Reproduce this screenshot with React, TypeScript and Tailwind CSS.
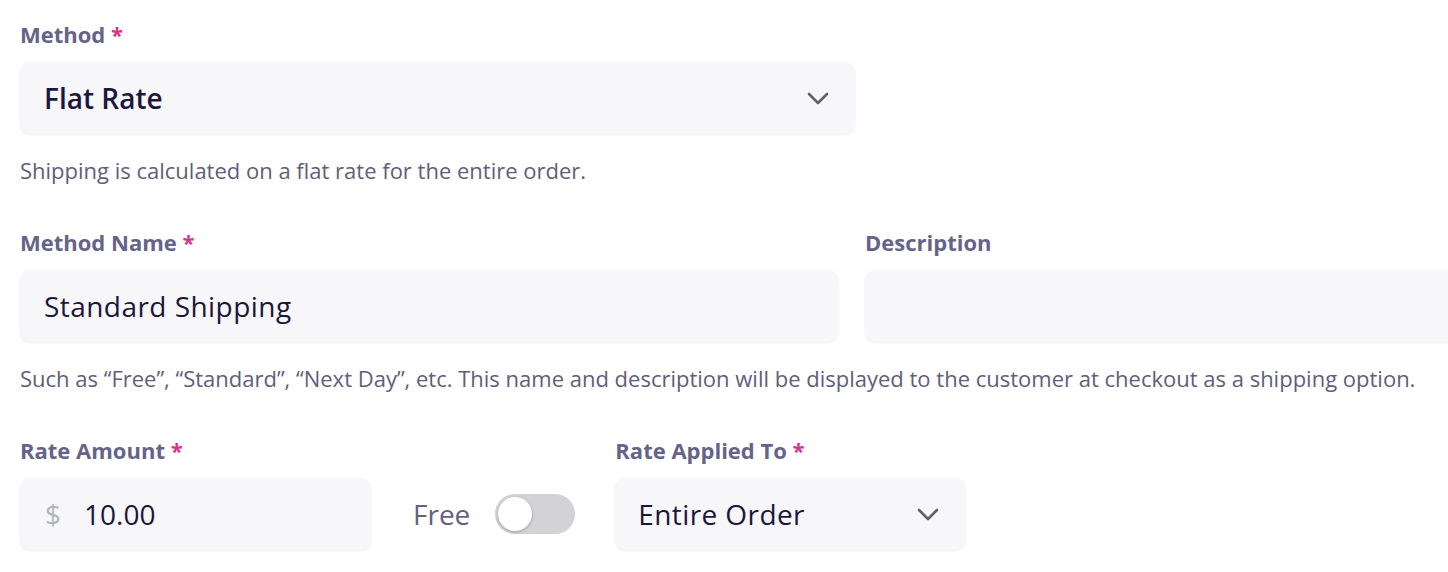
import React from 'react';

const font = { fontFamily: '"Open Sans", "Noto Sans", sans-serif' };

function Label({ text, required }: { text: string; required?: boolean }) {
  return (
    <div className="text-[22px] font-bold leading-[30px] text-[#64638a]">
      {text}
      {required && <span className="text-[#d6338a]"> *</span>}
    </div>
  );
}

function Chevron() {
  return (
    <svg width="22" height="13" viewBox="0 0 22 13" fill="none">
      <polyline
        points="2,2 11,11 20,2"
        stroke="#5e6172"
        strokeWidth="2.6"
        strokeLinecap="round"
        strokeLinejoin="round"
      />
    </svg>
  );
}

function Box({
  className,
  children,
}: {
  className?: string;
  children?: React.ReactNode;
}) {
  return (
    <div
      className={`flex h-[72px] items-center rounded-[10px] bg-[#f7f7f9] shadow-[0_1px_3px_rgba(30,30,60,0.08)] ${className ?? ''}`}
    >
      {children}
    </div>
  );
}

function Helper({ children }: { children: React.ReactNode }) {
  return (
    <p className="text-[22px] leading-[28px] text-[#5f5e7b]">{children}</p>
  );
}

export default function App() {
  return (
    <div className="min-h-screen w-full overflow-hidden bg-white" style={font}>
      <div className="flex flex-col pl-5 pt-[19px]">
        <Label text="Method" required />
        <Box className="mt-[13px] w-[835px] justify-between pl-[24px] pr-[26px]">
          <span className="text-[28px] font-semibold text-[#1b1640]">Flat Rate</span>
          <Chevron />
        </Box>
        <div className="mt-[22px]">
          <Helper>Shipping is calculated on a flat rate for the entire order.</Helper>
        </div>

        <div className="mt-[43px] flex gap-[27px]">
          <div className="flex w-[818px] shrink-0 flex-col">
            <Label text="Method Name" required />
            <Box className="mt-[13px] pl-[24px]">
              <span className="text-[28px] font-medium tracking-[0.45px] text-[#1b1640]">
                Standard Shipping
              </span>
            </Box>
          </div>
          <div className="flex w-[700px] shrink-0 flex-col">
            <Label text="Description" />
            <Box className="mt-[13px]" />
          </div>
        </div>
        <div className="mt-[22px]">
          <Helper>
            Such as “Free”, “Standard”, “Next Day”, etc. This name and description
            will be displayed to the customer at checkout as a shipping option.
          </Helper>
        </div>

        <div className="mt-[43px] flex items-end">
          <div className="flex w-[351px] flex-col">
            <Label text="Rate Amount" required />
            <Box className="mt-[13px] pl-[25px]">
              <span className="text-[28px] text-[#b4b4bc]">$</span>
              <span className="ml-[23px] text-[28px] font-medium text-[#1b1640]">
                10.00
              </span>
            </Box>
          </div>
          <div className="ml-[42px] flex h-[72px] items-center">
            <span className="text-[28px] text-[#64627d]">Free</span>
            <button
              type="button"
              aria-label="Free"
              className="ml-[25px] flex h-[40px] w-[80px] items-center rounded-full bg-[#d2d2d7] pl-[3px]"
            >
              <span className="h-[34px] w-[34px] rounded-full bg-white shadow-[0_1px_3px_rgba(0,0,0,0.25)]" />
            </button>
          </div>
          <div className="ml-[40px] flex w-[350px] flex-col">
            <Label text="Rate Applied To" required />
            <Box className="mt-[13px] justify-between pl-[23px] pr-[26px]">
              <span className="text-[28px] font-medium tracking-[0.4px] text-[#1b1640]">
                Entire Order
              </span>
              <Chevron />
            </Box>
          </div>
        </div>
      </div>
    </div>
  );
}
